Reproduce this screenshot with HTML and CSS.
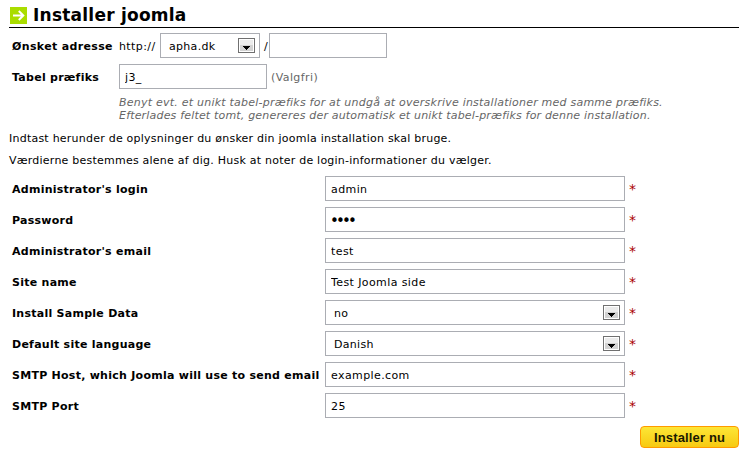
FILE: index.html
```html
<!DOCTYPE html>
<html lang="da">

<head>
    <meta charset="UTF-8">
    <title>Installer joomla</title>
    <link rel="stylesheet" href="styles.css">
</head>

<body>
    <form class="install">
        <h1>
            <svg class="icon" width="17" height="17" viewBox="0 0 17 17">
                <rect width="17" height="17" fill="#aadd00" />
                <path d="M3 8.5H13.5M8.8 4L13.3 8.5L8.8 13" fill="none" stroke="#fff" stroke-width="2" />
            </svg>
            <span>Installer joomla</span>
        </h1>

        <div class="row address">
            <label class="address-label" for="domain">Ønsket adresse</label>
            <span class="http">http://</span>
            <div class="select domain">
                <select id="domain">
                    <option>apha.dk</option>
                </select>
                <svg class="arrow" width="17" height="15" viewBox="0 0 17 15"><use href="#drop" /></svg>
            </div>
            <span class="slash">/</span>
            <input class="path" type="text">
        </div>
        <div class="row">
            <label class="prefix-label" for="prefix">Tabel præfiks</label>
            <input class="prefix" id="prefix" type="text" value="j3_">
            <span class="optional">(Valgfri)</span>
        </div>
        <p class="hint"><span class="hint-first">Benyt evt. et unikt tabel-præfiks for at undgå at overskrive installationer med samme præfiks.</span><br><span class="hint-second">Efterlades feltet tomt, genereres der automatisk et unikt tabel-præfiks for denne installation.</span></p>

        <p class="intro">Indtast herunder de oplysninger du ønsker din joomla installation skal bruge.</p>
        <p class="intro">Værdierne bestemmes alene af dig. Husk at noter de login-informationer du vælger.</p>

        <div class="fields">
            <div class="row">
                <label for="login">Administrator's login</label>
                <input id="login" type="text" value="admin">
                <span class="req">*</span>
            </div>
            <div class="row">
                <label for="password">Password</label>
                <input id="password" type="password" value="test">
                <span class="req">*</span>
            </div>
            <div class="row">
                <label for="email">Administrator's email</label>
                <input id="email" type="text" value="test">
                <span class="req">*</span>
            </div>
            <div class="row">
                <label for="site">Site name</label>
                <input id="site" type="text" value="Test Joomla side">
                <span class="req">*</span>
            </div>
            <div class="row">
                <label for="sample">Install Sample Data</label>
                <div class="select">
                    <select id="sample">
                        <option>no</option>
                    </select>
                    <svg class="arrow" width="17" height="15" viewBox="0 0 17 15"><use href="#drop" /></svg>
                </div>
                <span class="req">*</span>
            </div>
            <div class="row">
                <label for="language">Default site language</label>
                <div class="select">
                    <select id="language">
                        <option>Danish</option>
                    </select>
                    <svg class="arrow" width="17" height="15" viewBox="0 0 17 15"><use href="#drop" /></svg>
                </div>
                <span class="req">*</span>
            </div>
            <div class="row">
                <label for="host">SMTP Host, which Joomla will use to send email</label>
                <input id="host" type="text" value="example.com">
                <span class="req">*</span>
            </div>
            <div class="row">
                <label for="port">SMTP Port</label>
                <input id="port" type="text" value="25">
                <span class="req">*</span>
            </div>
        </div>

        <div class="actions">
            <button type="button">Installer nu</button>
        </div>
    </form>

    <svg class="defs" width="0" height="0">
        <symbol id="drop" viewBox="0 0 17 15">
            <rect x=".5" y=".5" width="16" height="14" fill="#fff" stroke="#707070" />
            <rect x="2" y="2" width="13" height="5" fill="#ebebeb" />
            <rect x="2" y="7" width="13" height="6" fill="#d2d2d2" />
            <path d="M5 8H12V9H11V10H10V11H9V12H8V11H7V10H6V9H5Z" fill="#000" />
        </symbol>
    </svg>
</body>

</html>
```

FILE: styles.css
```css
* {
    box-sizing: border-box;
}

body {
    margin: 0;
    font-family: "DejaVu Sans", Verdana, sans-serif;
    font-size: 11px;
    letter-spacing: 0.23px;
    color: #000;
    background-color: #fff;
}

.install {
    width: 730px;
    margin-left: 9px;
    padding-top: 3px;
}

h1 {
    display: flex;
    align-items: center;
    height: 25px;
    margin: 0 0 2px;
    padding-left: 1px;
    border-bottom: 1px solid #000;
    font-size: 17px;
    line-height: 24px;
}

.icon {
    margin-right: 6px;
}

.row {
    display: flex;
    align-items: center;
    height: 31px;
    padding-left: 3px;
    white-space: nowrap;
}

label {
    flex: none;
    width: 313px;
    padding-top: 2px;
    font-weight: bold;
    letter-spacing: 0.26px;
}

.address-label,
.prefix-label {
    width: 107px;
}

.address-label {
    letter-spacing: 0.35px;
}

input,
select {
    width: 300px;
    height: 25px;
    margin: 0;
    padding: 1px 5px 0;
    border: 1px solid #abadb3;
    border-radius: 0;
    background-color: #fff;
    color: #000;
    font: inherit;
    letter-spacing: 0.4px;
}

input[type="password"] {
    padding: 2px 4px 0;
    font-size: 15px;
    letter-spacing: -2.85px;
}

select {
    width: 100%;
    padding: 2px 8px 0;
    letter-spacing: 0.3px;
    appearance: none;
}

.select {
    position: relative;
    width: 300px;
}

.arrow {
    position: absolute;
    top: 5px;
    right: 5px;
}

.http {
    width: 41px;
    padding-top: 2px;
    letter-spacing: 0.4px;
}

.domain {
    width: 100px;
}

.slash {
    width: 9px;
    padding: 2px 0 0 4px;
}

.path {
    width: 118px;
}

.prefix {
    width: 148px;
}

.optional {
    margin-left: 4px;
    padding-top: 2px;
    color: #666;
    letter-spacing: 0.4px;
}

.hint {
    margin: 4px 0 0 110px;
    color: #666;
    font-style: italic;
    line-height: 13px;
    white-space: nowrap;
}

.hint-second {
    letter-spacing: 0.18px;
}

.intro {
    margin: 9px 0 0;
    line-height: 13px;
    white-space: nowrap;
}

.hint + .intro {
    margin-top: 10px;
}

.fields {
    margin-top: 6px;
}

.req {
    margin-left: 4px;
    padding-top: 1px;
    color: #a00;
    font-size: 14px;
}

.actions {
    display: flex;
    justify-content: flex-end;
    margin-top: 5px;
}

button {
    width: 99px;
    height: 22px;
    padding: 1px 0 0;
    border: 1px solid #ff9a00;
    border-radius: 4px;
    background: linear-gradient(#fde636, #f7ca12);
    color: #1a1a00;
    font: bold 13px "Liberation Sans", Arial, sans-serif;
    letter-spacing: 0.15px;
}

.defs {
    position: absolute;
}
```
